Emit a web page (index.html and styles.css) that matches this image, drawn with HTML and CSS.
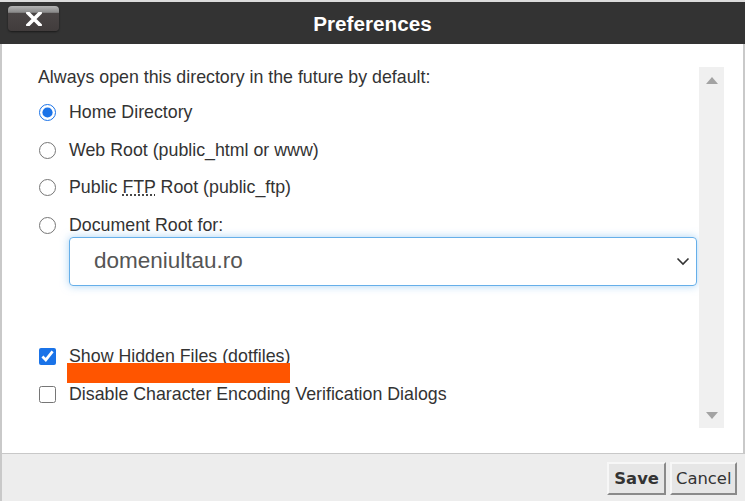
FILE: index.html
```html
<!DOCTYPE html>
<html>
<head>
<meta charset="utf-8">
<link rel="stylesheet" href="styles.css">
</head>
<body>
<div class="dialog">
  <div class="header">
    <div class="hleft"><button class="close" aria-label="Close"><svg width="16" height="14" viewBox="0 0 16 14"><path d="M2 1 L14 13 M14 1 L2 13" stroke="#fff" stroke-width="3.6" stroke-linecap="square"/></svg></button></div>
    <h1 class="title">Preferences</h1>
    <div></div>
  </div>
  <div class="body">
    <div class="content">
      <p class="intro">Always open this directory in the future by default:</p>
      <div class="radios">
        <label class="row"><input type="radio" name="dir" checked><span>Home Directory</span></label>
        <label class="row"><input type="radio" name="dir"><span>Web Root (public_html or www)</span></label>
        <label class="row"><input type="radio" name="dir"><span>Public <abbr title="File Transfer Protocol">FTP</abbr> Root (public_ftp)</span></label>
        <label class="row"><input type="radio" name="dir"><span>Document Root for:</span></label>
      </div>
      <div class="select">
        <span>domeniultau.ro</span>
        <svg width="14" height="9" viewBox="0 0 14 9"><path d="M1.5 1.5 L7 7 L12.5 1.5" fill="none" stroke="#333" stroke-width="1.6"/></svg>
      </div>
      <div class="checks">
        <label class="row"><input type="checkbox" checked><span class="hl">Show Hidden Files (dotfiles)<i class="mark"></i></span></label>
        <label class="row"><input type="checkbox"><span>Disable Character Encoding Verification Dialogs</span></label>
      </div>
    </div>
    <div class="scrollbar">
      <svg width="12" height="7" viewBox="0 0 12 7"><path d="M0 7 L6 0 L12 7 Z" fill="#a3a3a3"/></svg>
      <svg width="12" height="7" viewBox="0 0 12 7"><path d="M0 0 L6 7 L12 0 Z" fill="#a3a3a3"/></svg>
    </div>
  </div>
  <div class="footer">
    <button class="btn save">Save</button>
    <button class="btn cancel">Cancel</button>
  </div>
</div>
</body>
</html>
```
FILE: styles.css
```css
html, body {
  margin: 0;
  padding: 0;
  width: 745px;
  height: 501px;
  overflow: hidden;
  background: #fff;
}
.dialog {
  width: 745px;
  height: 501px;
  box-sizing: border-box;
  border-top: 2px solid #dcdcdc;
  display: flex;
  flex-direction: column;
  font-family: "Liberation Sans", Arial, sans-serif;
  color: #333;
}
.header {
  height: 42px;
  background: #333;
  display: grid;
  grid-template-columns: 1fr auto 1fr;
  align-items: center;
}
.hleft {
  padding-left: 8px;
  align-self: start;
  padding-top: 4px;
}
.close {
  width: 51px;
  height: 25px;
  border: none;
  border-radius: 4px;
  padding: 0;
  background: linear-gradient(#b4b4b4 0%, #8a8a8a 25%, #4a4545 30%, #413c3c 100%);
  box-shadow: 0 1px 2px #1a1a1a;
  display: flex;
  align-items: center;
  justify-content: center;
}
.close svg { margin-top: 1px; }
.title {
  margin: 0;
  color: #fff;
  font-size: 20.7px;
  font-weight: bold;
  padding-top: 2px;
}
.body {
  flex: 1;
  display: flex;
  border-left: 2px solid #c9c9c9;
  border-right: 2px solid #c9c9c9;
  background: #fff;
}
.content {
  width: 660px;
  padding-left: 36px;
  padding-top: 22px;
  font-size: 17.8px;
}
.intro {
  margin: 0 0 13px 0;
  line-height: 22px;
}
.radios, .checks {
  display: flex;
  flex-direction: column;
  gap: 15.5px;
}
.row {
  display: flex;
  align-items: center;
  height: 22px;
  line-height: 22px;
}
.row input {
  margin: 1px 13px 0 1px;
  width: 17px;
  height: 17px;
  accent-color: #1a73e8;
}
abbr {
  text-decoration: underline dotted;
  text-underline-offset: 2px;
}
.select {
  margin: 1px 0 0 31px;
  width: 628px;
  height: 49px;
  box-sizing: border-box;
  border: 1px solid #66afe9;
  border-radius: 4px;
  box-shadow: 0 0 8px rgba(102, 175, 233, 0.55);
  display: flex;
  align-items: center;
  justify-content: space-between;
  padding: 0 6px 0 24px;
  font-size: 22.5px;
  color: #555;
}
.checks {
  margin-top: 59px;
  gap: 16px;
}
.hl {
  position: relative;
}
.mark {
  position: absolute;
  left: -2px;
  top: 18px;
  width: 223px;
  height: 20px;
  background: #ff5500;
}
.scrollbar {
  margin-top: 23px;
  margin-left: 1px;
  width: 25px;
  height: 361px;
  background: #f0f0f0;
  display: flex;
  flex-direction: column;
  justify-content: space-between;
  align-items: center;
  padding: 10px 0 9px;
  box-sizing: border-box;
}
.footer {
  height: 48px;
  box-sizing: border-box;
  border-top: 1px solid #c8c8c8;
  border-left: 2px solid #c9c9c9;
  background: #ededed;
  display: flex;
  justify-content: flex-end;
  align-items: center;
  gap: 4px;
  padding-right: 8px;
  padding-top: 2px;
}
.btn {
  height: 33px;
  padding: 0 4px;
  font-family: "DejaVu Sans", Verdana, sans-serif;
  font-size: 16.4px;
  color: #333;
  background: #e6e6e6;
  border: 2px solid;
  border-color: #f7f7f7 #8a8a8a #8a8a8a #f7f7f7;
}
.save {
  font-weight: bold;
  padding: 0 5.5px;
}
.cancel {
  padding: 0 3.5px;
}
```
